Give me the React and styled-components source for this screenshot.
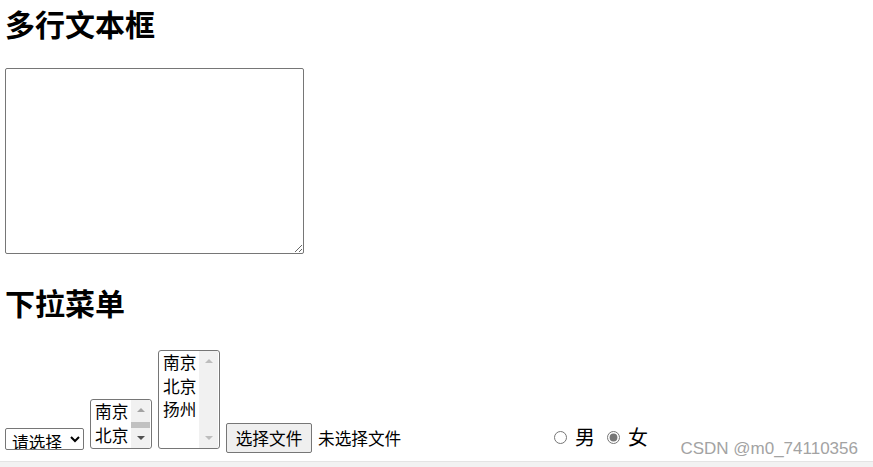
import React from 'react';
import styled, { createGlobalStyle } from 'styled-components';

const GlobalStyle = createGlobalStyle`
	html, body {
		margin: 0;
		padding: 0;
		background: #fff;
		overflow: hidden;
	}
	body {
		font-family: "Noto Sans CJK SC", "Liberation Sans", sans-serif;
		color: #000;
	}
`;

const Page = styled.div`
	height: 467px;
	display: flex;
	flex-direction: column;
	position: relative;
`;

const Content = styled.div`
	flex: 1;
	padding-left: 5px;
	font-size: 20px;
`;

const Title = styled.h2`
	font-size: 30px;
	font-weight: bold;
	line-height: 40px;
	margin: ${p => (p.first ? '2.5px 0 25.5px' : '28px 0 28px')};
`;

const TextArea = styled.textarea`
	display: block;
	box-sizing: border-box;
	width: 299px;
	height: 186px;
	margin: 0;
	border: 1px solid #767676;
	border-radius: 2px;
	font-family: "Liberation Mono", monospace;
	font-size: 16.67px;
	resize: both;
`;

const Row = styled.div`
	display: flex;
	align-items: flex-end;
	gap: 6px;
`;

const Dropdown = styled.select`
	box-sizing: border-box;
	width: 79px;
	height: 22px;
	margin-bottom: 3px;
	padding: 0 0 0 2px;
	font-family: "Noto Sans CJK SC", sans-serif;
	font-size: 16.67px;
	border: 1px solid #767676;
	border-radius: 2px;
	background: #fff;
	color: #000;
`;

const ListBox = styled.div`
	box-sizing: border-box;
	width: 62px;
	height: ${p => p.h}px;
	margin-bottom: 4px;
	display: flex;
	border: 1px solid #767676;
	border-radius: 3px;
	background: #fff;
`;

const Options = styled.div`
	flex: 1;
	padding-left: 4px;
	font-size: 16.67px;
	line-height: 23.5px;
	white-space: nowrap;
`;

const ScrollBar = styled.div`
	width: 19px;
	margin-right: 1px;
	display: flex;
	flex-direction: column;
	background: #f1f1f1;
`;

const ArrowButton = styled.div`
	height: 20px;
	flex: none;
	display: flex;
	align-items: center;
	justify-content: center;
	${p => (p.down ? 'margin-top: auto;' : '')}

	&::before {
		content: '';
		border-left: 4px solid transparent;
		border-right: 4px solid transparent;
		${p =>
			p.down
				? `border-top: 4px solid ${p.color};`
				: `border-bottom: 4px solid ${p.color};`}
	}
`;

const Thumb = styled.div`
	height: 6px;
	margin: 1.5px 0 0;
	background: #c1c1c1;
`;

const FileField = styled.div`
	width: 316px;
	display: flex;
	align-items: center;
	font-size: 16.67px;
`;

const FileButton = styled.label`
	box-sizing: border-box;
	width: 86px;
	height: 30px;
	display: flex;
	align-items: center;
	justify-content: center;
	background: #efefef;
	border: 1px solid #767676;
	border-radius: 2px;
	cursor: default;

	input {
		display: none;
	}
`;

const FileName = styled.span`
	margin-left: 6px;
`;

const Gender = styled.label`
	display: flex;
	align-items: center;
	margin-bottom: 4px;
	font-size: 20px;
	line-height: 24px;
`;

const Radio = styled.input`
	width: 13px;
	height: 13px;
	margin: 0 8px 0 6px;
	accent-color: #767676;
`;

const BottomBand = styled.div`
	height: 5px;
	background: #f2f2f2;
	border-top: 1px solid #e4e4e4;
`;

const Watermark = styled.div`
	position: absolute;
	right: 15px;
	bottom: 7.6px;
	font-family: "Liberation Sans", Arial, sans-serif;
	font-size: 17px;
	line-height: 20px;
	color: #a3a3a3;
`;

// a list box of `rows` visible rows; only the rows in view are drawn
const Listbox = ({ items, rows, h }) => {
	const scroll = items.length > rows;
	return (
		<ListBox h={h}>
			<Options>
				{items.slice(0, rows).map(item => (
					<div key={item}>{item}</div>
				))}
			</Options>
			<ScrollBar>
				<ArrowButton color={scroll ? '#a3a3a3' : '#bdbdbd'} />
				{scroll && <Thumb />}
				<ArrowButton down color={scroll ? '#505050' : '#bdbdbd'} />
			</ScrollBar>
		</ListBox>
	);
};

const cities = ['南京', '北京', '扬州'];

export default function App() {
	return (
		<>
			<GlobalStyle />
			<Page>
				<Content>
					<Title first>多行文本框</Title>
					<TextArea />
					<Title>下拉菜单</Title>
					<Row>
						<Dropdown defaultValue="">
							<option value="">请选择</option>
							<option>南京</option>
							<option>北京</option>
						</Dropdown>
						<Listbox items={cities} rows={2} h={50} />
						<Listbox items={cities} rows={4} h={99} />
						<FileField>
							<FileButton>
								<input type="file" />
								选择文件
							</FileButton>
							<FileName>未选择文件</FileName>
						</FileField>
						<Gender>
							<Radio type="radio" name="sex" />男
						</Gender>
						<Gender>
							<Radio type="radio" name="sex" defaultChecked />女
						</Gender>
					</Row>
				</Content>
				<BottomBand />
				<Watermark>CSDN @m0_74110356</Watermark>
			</Page>
		</>
	);
}
